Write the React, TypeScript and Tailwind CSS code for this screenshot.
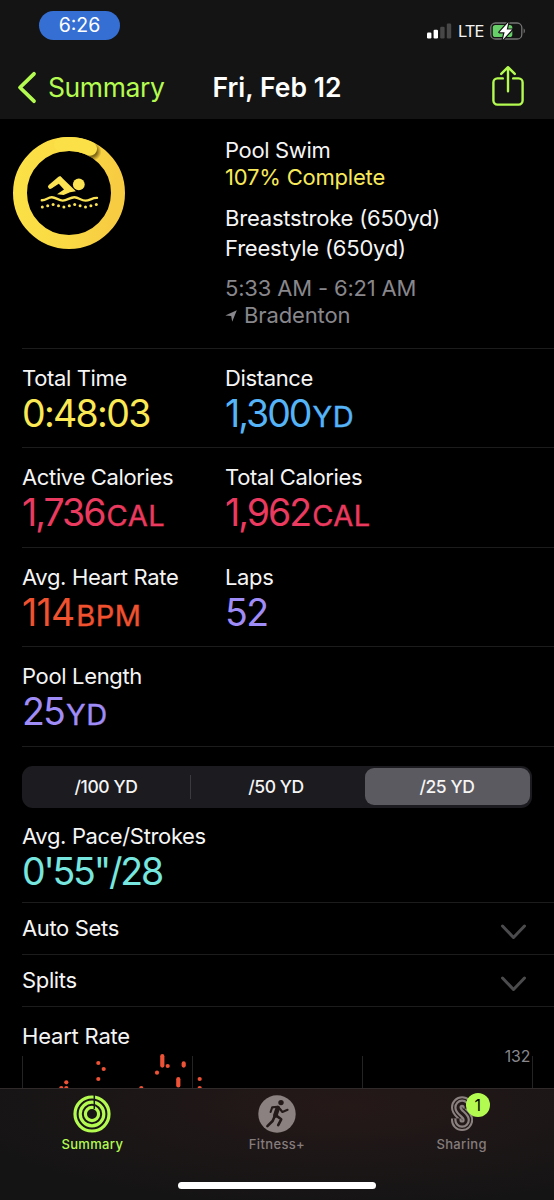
import type { ReactNode } from "react";
import clsx from "clsx";

type Metric = {
  label: string;
  value: string;
  unit?: string;
  // text color plus the value's letter spacing
  className: string;
};

const metricRows: Metric[][] = [
  [
    { label: "Total Time", value: "0:48:03", className: "text-[#fbe855] tracking-[-1.7px]" },
    { label: "Distance", value: "1,300", unit: "YD", className: "text-[#55b4f7] tracking-[-2px]" },
  ],
  [
    { label: "Active Calories", value: "1,736", unit: "CAL", className: "text-[#ea3a5f] tracking-[-2px]" },
    { label: "Total Calories", value: "1,962", unit: "CAL", className: "text-[#ea3a5f] tracking-[-2px]" },
  ],
  [
    { label: "Avg. Heart Rate", value: "114", unit: "BPM", className: "text-[#f0512f] tracking-[-0.8px]" },
    { label: "Laps", value: "52", className: "text-[#a08cf7] tracking-[-1.6px]" },
  ],
  [{ label: "Pool Length", value: "25", unit: "YD", className: "text-[#a08cf7] tracking-[-1.8px]" }],
];

const segments = ["/100 YD", "/50 YD", "/25 YD"];

// [x, top, bottom] of every heart rate sample, in chart units
const samples = [
  [39.3, 38, 38],
  [44.3, 32.3, 32.3],
  [44.3, 38, 38],
  [76.3, 13, 13],
  [81.7, 19, 19],
  [76.3, 29, 29],
  [119.3, 38, 38],
  [135, 22.7, 22.7],
  [140.3, 6.2, 15.6],
  [145.7, 16, 16],
  [156.3, 29.2, 35.4],
  [161.7, 13.4, 15.6],
  [177.7, 29, 29],
  [177.7, 38, 38],
];

function StatusBar() {
  return (
    <div className="flex h-[51px] items-center justify-between pl-[39px] pr-[28px]">
      <div className="flex h-[29px] w-[81px] items-center justify-center rounded-full bg-[#356fd3] text-[19.5px] text-white">
        6:26
      </div>
      <div className="mt-[10px] flex items-center">
        <svg width="25" height="16" viewBox="0 0 25 16">
          <rect x="0" y="9.5" width="4.4" height="6" rx="1.2" fill="#fff" />
          <rect x="6.6" y="6.8" width="4.4" height="8.7" rx="1.2" fill="#fff" />
          <rect x="13.2" y="3.7" width="4.4" height="11.8" rx="1.2" fill="#474747" />
          <rect x="19.8" y="0.5" width="4.4" height="15" rx="1.2" fill="#474747" />
        </svg>
        <span className="ml-[6px] w-[26px] text-[16.5px] leading-4 tracking-[-0.9px] text-[#f4f4f4]">
          LTE
        </span>
        <svg className="ml-[6px]" width="36" height="20" viewBox="0 0 36 20">
          <rect x="0.8" y="2" width="31" height="16" rx="4.6" fill="none" stroke="#747474" strokeWidth="1.3" />
          <path d="M33.6 7.6c1.7.6 1.7 4.2 0 4.8z" fill="#747474" />
          <rect x="2.8" y="4" width="19.5" height="12" rx="2.6" fill="#67cf68" />
          <path
            d="M18.4 1.2 9.4 11.2h5.2l-1.8 7.6 9.2-10.2h-5.3z"
            fill="#fff"
            stroke="#141414"
            strokeWidth="2.4"
            strokeLinejoin="round"
            paintOrder="stroke"
          />
        </svg>
      </div>
    </div>
  );
}

function NavBar() {
  return (
    <div className="grid h-[68px] grid-cols-[190px_174px_190px] items-center pb-px pt-[5px]">
      <button className="flex items-center pl-[17px] text-[#b4fb51]">
        <svg width="20" height="33" viewBox="0 0 20 33" fill="none">
          <path
            d="M17 2.8 3 16.5 17 30.2"
            stroke="currentColor"
            strokeWidth="3.8"
            strokeLinecap="round"
            strokeLinejoin="round"
          />
        </svg>
        <span className="ml-[11px] text-[26.5px] leading-8 tracking-[-0.4px]">Summary</span>
      </button>
      <h1 className="whitespace-nowrap text-center text-[26.5px] font-semibold leading-8 tracking-[0.05px] text-white">
        Fri, Feb 12
      </h1>
      <button className="-mt-[3px] justify-self-end pr-[29px] text-[#b4fb51]">
        <svg width="34" height="42" viewBox="0 0 34 42" fill="none" stroke="currentColor" strokeWidth="2.4">
          <path d="M11.8 13.4H6.4a4 4 0 0 0-4 4v18.2a4 4 0 0 0 4 4h21.2a4 4 0 0 0 4-4V17.4a4 4 0 0 0-4-4h-5.4" strokeLinecap="round" />
          <path d="M17 2.4v23.8M10.2 8.9 17 2.2l6.8 6.7" strokeLinecap="round" strokeLinejoin="round" />
        </svg>
      </button>
    </div>
  );
}

function GoalRing() {
  const dots = Array.from({ length: 11 }, (_, i) => ({
    x: 29.3 + i * 5.4,
    y: [70, 68.7, 67.4, 68.7][i % 4],
  }));
  return (
    <svg width="112" height="112" viewBox="0 0 112 112">
      <defs>
        <linearGradient id="ring" x1="0" y1="0.3" x2="1" y2="0.4">
          <stop offset="0" stopColor="#fbe046" />
          <stop offset="0.55" stopColor="#fad944" />
          <stop offset="1" stopColor="#f7cb42" />
        </linearGradient>
        <radialGradient id="capShadow">
          <stop offset="0.5" stopColor="#3d2c00" stopOpacity="0.65" />
          <stop offset="1" stopColor="#3d2c00" stopOpacity="0" />
        </radialGradient>
        <clipPath id="ringBand">
          <path clipRule="evenodd" d="M56 0a56 56 0 1 1 0 112a56 56 0 1 1 0-112zM56 14a42 42 0 1 0 0 84a42 42 0 1 0 0-84z" />
        </clipPath>
      </defs>
      <circle cx="56" cy="56" r="49" fill="none" stroke="url(#ring)" strokeWidth="14" />
      <circle cx="79" cy="14.6" r="9.5" fill="url(#capShadow)" clipPath="url(#ringBand)" />
      <path d="M48 7.66A49 49 0 0 1 77 11.75" fill="none" stroke="#fbe048" strokeWidth="14" strokeLinecap="round" />
      <g fill="#fbe353">
        <circle cx="65.8" cy="47.4" r="5.9" />
        <path d="M47.4 39.2 62.9 54.2 57 55.3 50.6 57.9 44 57.2 51 52.6 45.8 46.8 38 51.7z" />
        <path d="M37.2 49.6 46.6 41.6" stroke="#fbe353" strokeWidth="4.4" strokeLinecap="round" />
        <path
          d="M28.8 63.2c4.6.2 5.7-2.9 10-2.9s6.6 3.3 11 3.3 7.2-3.3 11.6-3.3 6.6 3.3 11 3.3 6.6-2.9 11.6-2.7"
          fill="none"
          stroke="#fbe353"
          strokeWidth="2.4"
          strokeLinecap="round"
        />
        {dots.map((dot) => (
          <circle key={dot.x} cx={dot.x} cy={dot.y} r="1.5" />
        ))}
      </g>
    </svg>
  );
}

function WorkoutHeader() {
  return (
    <section className="flex h-[228.5px] pt-[18px]">
      <div className="w-[225px] pl-[13px]">
        <GoalRing />
      </div>
      <div className="whitespace-nowrap text-[22px] leading-[27px] tracking-[-0.2px] text-[#f5f5f5]">
        <p className="tracking-[-0.35px]">Pool Swim</p>
        <p className="text-[#f8e95a]">107% Complete</p>
        <p className="mt-[14px]">Breaststroke (650yd)</p>
        <p className="mt-[2.5px]">Freestyle (650yd)</p>
        <p className="mt-[13.5px] tracking-[-0.17px] text-[#88878c]">5:33 AM - 6:21 AM</p>
        <p className="flex items-center tracking-[-0.12px] text-[#88878c]">
          <svg className="mr-[7px] mt-px" width="12" height="12" viewBox="0 0 12 12">
            <path d="M11.8.3 7.2 11.7 6.2 6 .3 5.4z" fill="currentColor" />
          </svg>
          Bradenton
        </p>
      </div>
    </section>
  );
}

function MetricCell({ label, value, unit, className }: Metric) {
  return (
    <div className="whitespace-nowrap">
      <p className="text-[22px] leading-[27px] tracking-[-0.35px] text-[#f5f5f5]">{label}</p>
      <p className={clsx("text-[37.5px] leading-[43px]", className)}>
        {value}
        {unit && (
          <span className="ml-[2px] text-[29px] tracking-[0.5px] [-webkit-text-stroke:0.4px_currentColor]">
            {unit}
          </span>
        )}
      </p>
    </div>
  );
}

function DisclosureRow({ children }: { children: ReactNode }) {
  return (
    <div className="ml-[22px] flex h-[52px] items-center justify-between border-t border-[#1c1c1d] pr-[27px]">
      <span className="text-[22px] leading-[27px] tracking-[-0.35px] text-[#f5f5f5]">{children}</span>
      <svg className="mt-[6px]" width="27" height="16" viewBox="0 0 27 16" fill="none">
        <path
          d="M2.5 2 13.5 13.5 24.5 2"
          stroke="#4b4b4d"
          strokeWidth="3"
          strokeLinecap="round"
          strokeLinejoin="round"
        />
      </svg>
    </div>
  );
}

function HeartRateChart() {
  return (
    <svg className="block overflow-visible" width="514" height="42" viewBox="0 0 514 42">
      {[0.5, 170.5, 340.5, 510.5].map((x) => (
        <path key={x} d={`M${x} 6V42`} stroke="#242425" />
      ))}
      {samples.map(([x, top, bottom]) => (
        <path
          key={`${x}-${top}`}
          d={`M${x} ${top}V${bottom + 0.01}`}
          stroke="#ee5237"
          strokeWidth="4.2"
          strokeLinecap="round"
        />
      ))}
      <text x="508.5" y="11.5" textAnchor="end" fontSize="15.8" fill="#88878c">
        132
      </text>
    </svg>
  );
}

function RingsIcon() {
  return (
    <svg width="38" height="38" viewBox="0 0 38 38" fill="none">
      <g stroke="#b4fb51" strokeWidth="3.2">
        <circle cx="19" cy="19" r="17" />
        <circle cx="19" cy="19" r="11.8" />
        <circle cx="19" cy="19" r="6.6" />
      </g>
      <path d="M21.3 0v14" stroke="#171515" strokeWidth="1.5" />
    </svg>
  );
}

function RunnerIcon() {
  return (
    <svg width="38" height="38" viewBox="0 0 38 38" fill="none">
      <circle cx="19" cy="19" r="18.7" fill="#8b8181" />
      <g stroke="#231a19" strokeLinecap="round" strokeLinejoin="round">
        <circle cx="23" cy="7.6" r="2.7" fill="#231a19" stroke="none" />
        <path d="M19.8 13 17.3 20.5" strokeWidth="4.6" />
        <path d="M19.5 11.8 14.2 12.4 12.6 17M21.6 13.5 24.4 17 29.6 14.8" strokeWidth="2.1" />
        <path d="M18.3 20.6 23.2 24.3 20.2 30.2M16.6 21.5 14.6 26 9.4 31.2" strokeWidth="2.6" />
      </g>
    </svg>
  );
}

function SharingIcon() {
  const spine = "M15.2 12.5V11.4A4.1 4.1 0 0 0 7 11.4C7 16.8 15.2 18.6 15.2 24A4.1 4.1 0 0 1 7 24V22.5";
  return (
    <svg width="22.2" height="35.4" viewBox="0 0 22.2 35.4" fill="none">
      <path d={spine} stroke="#8b8181" strokeWidth="14" />
      <path d={spine} stroke="#231a19" strokeWidth="10" />
      <path d={spine} stroke="#8b8181" strokeWidth="7.4" />
      <path d={spine} stroke="#231a19" strokeWidth="3" />
    </svg>
  );
}

function TabItem({ label, active, children }: { label: string; active?: boolean; children: ReactNode }) {
  return (
    <div className="flex flex-col items-center">
      <div className="relative flex h-[38px] items-center">{children}</div>
      <span
        className={clsx(
          "mt-[3px] text-[13px] font-medium leading-4 tracking-[0.35px]",
          active ? "text-[#b4fb51]" : "text-[#857c7c]"
        )}
      >
        {label}
      </span>
    </div>
  );
}

function TabBar() {
  return (
    <nav className="flex h-[112px] flex-col items-center justify-between border-t border-[#302b2a] bg-[radial-gradient(70%_90%_at_62%_15%,#251918,#151415)] pb-[11px] pt-[6px]">
      <div className="grid w-full grid-cols-3">
        <TabItem label="Summary" active>
          <RingsIcon />
        </TabItem>
        <TabItem label="Fitness+">
          <RunnerIcon />
        </TabItem>
        <TabItem label="Sharing">
          <SharingIcon />
          <span className="absolute -right-[17px] -top-[2px] flex size-[24px] items-center justify-center rounded-full bg-[#b4fb51] text-[16px] text-black">
            1
          </span>
        </TabItem>
      </div>
      <div className="h-[7px] w-[198px] rounded-full bg-white" />
    </nav>
  );
}

export default function App() {
  return (
    <div className="flex h-[1200px] w-[554px] flex-col overflow-hidden bg-black font-['Inter',sans-serif]">
      <header className="h-[119px] shrink-0 bg-[#141414]">
        <StatusBar />
        <NavBar />
      </header>

      <main className="min-h-0 flex-1 overflow-hidden">
        <WorkoutHeader />

        {metricRows.map((row) => (
          <div
            key={row[0].label}
            className="ml-[22px] grid h-[99.5px] grid-cols-[203px_1fr] border-t border-[#1c1c1d] pt-[16px]"
          >
            {row.map((metric) => (
              <MetricCell key={metric.label} {...metric} />
            ))}
          </div>
        ))}

        <div className="ml-[22px] border-t border-[#1c1c1d] pt-[19px]">
          <div className="flex h-[42px] w-[510px] items-center rounded-[11px] bg-[#1c1b1f] p-[2.5px]">
            {segments.map((segment, i) => (
              <div
                key={segment}
                className={clsx(
                  "flex items-center justify-center pt-px text-[17.5px] font-medium tracking-[-0.4px] text-[#f5f5f5]",
                  i === 0 && "h-[24px] w-[166px] border-r border-[#3b3b3f] pr-[2px]",
                  i === 1 && "h-[24px] flex-1 pr-[3px]",
                  i === 2 && "h-full w-[165px] rounded-[9px] bg-[#5b5a60]"
                )}
              >
                {segment}
              </div>
            ))}
          </div>
          <div className="h-[94.5px] pt-[15.5px]">
            <MetricCell
              label="Avg. Pace/Strokes"
              value={`0'55"/28`}
              className="text-[#76e6df] tracking-[-2.2px]"
            />
          </div>
        </div>

        <DisclosureRow>Auto Sets</DisclosureRow>
        <DisclosureRow>Splits</DisclosureRow>

        <section className="ml-[22px] border-t border-[#1c1c1d] pt-[16px]">
          <h2 className="text-[22px] leading-[27px] tracking-[-0.2px] text-[#f5f5f5]">Heart Rate</h2>
          <HeartRateChart />
        </section>
      </main>

      <TabBar />
    </div>
  );
}
